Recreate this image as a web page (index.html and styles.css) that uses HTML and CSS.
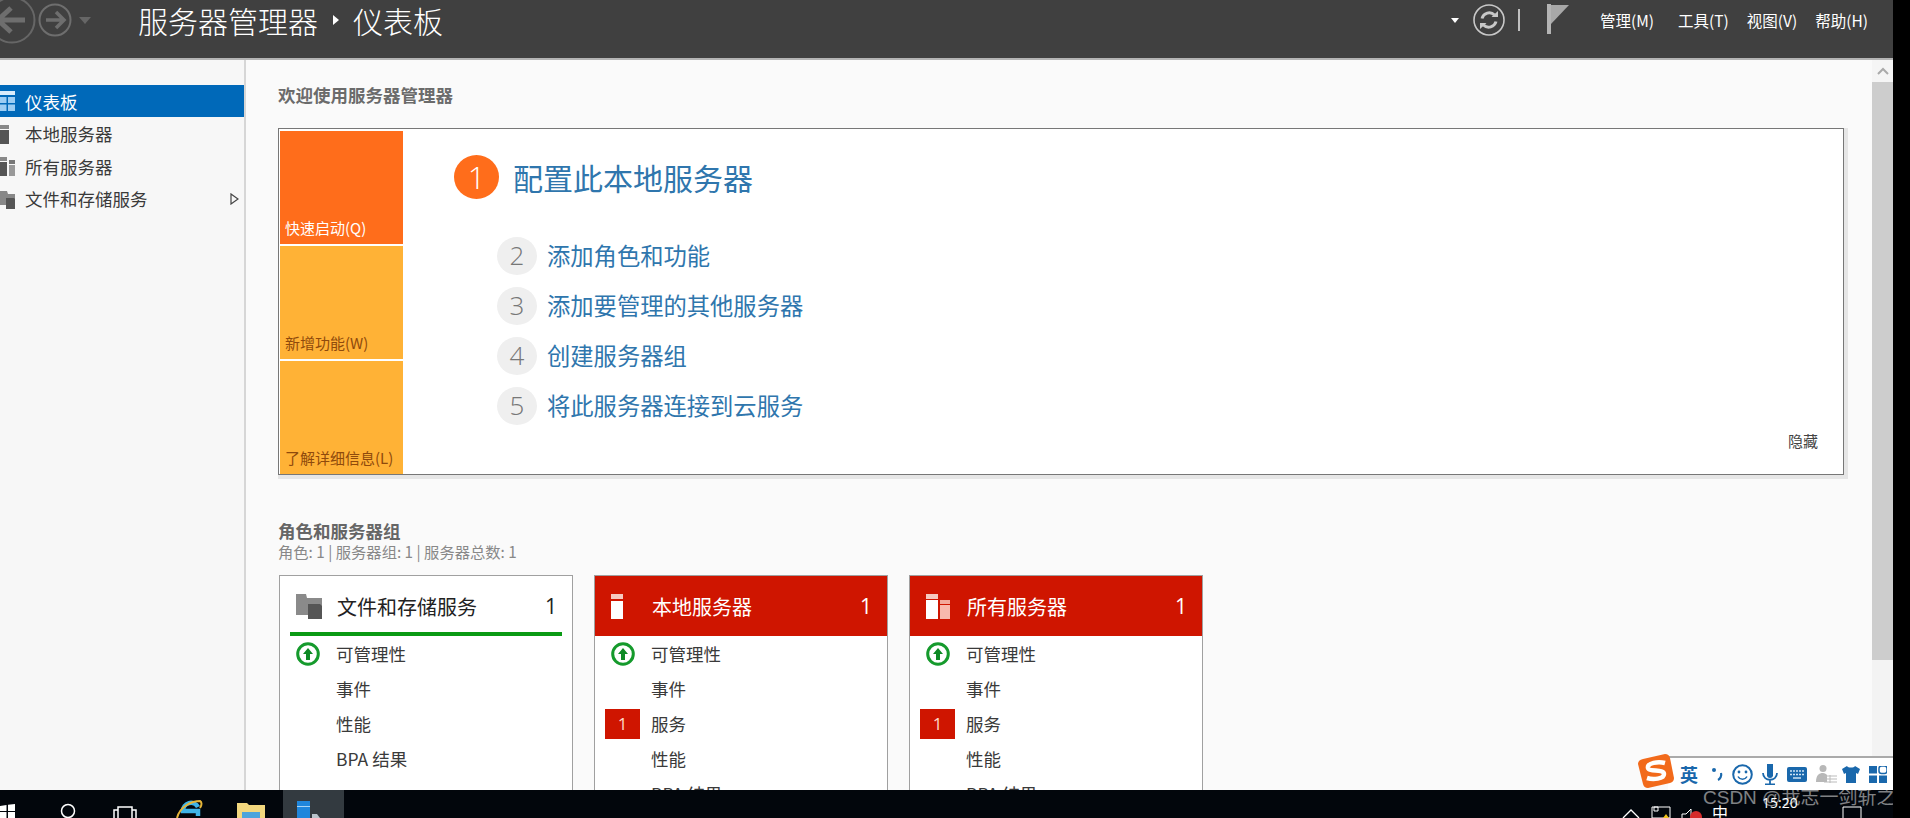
FILE: index.html
```html
<!DOCTYPE html>
<html lang="zh-CN">
<head>
  <meta charset="UTF-8">
  <title>服务器管理器</title>
  <link rel="stylesheet" href="styles.css">
</head>
<body>
  <div class="window">
    <header class="topbar">
      <svg class="nav" viewBox="0 0 100 44">
        <circle cx="12" cy="20" r="22.5" fill="none" stroke="#666" stroke-width="2"/>
        <path d="M-2 20H25M11 8L-2 20L11 32" fill="none" stroke="#6e6e6e" stroke-width="5"/>
        <circle cx="55" cy="20" r="15.5" fill="none" stroke="#6e6e6e" stroke-width="2"/>
        <path d="M46 20H63M56 12L64 20L56 28" fill="none" stroke="#6e6e6e" stroke-width="3.5"/>
        <path d="M79 17H91L85 24Z" fill="#666"/>
      </svg>
      <div class="crumbs">
        <span>服务器管理器</span>
        <i class="crumb-arrow"></i>
        <span>仪表板</span>
      </div>
      <div class="tools">
        <i class="drop-arrow"></i>
        <svg class="refresh" viewBox="0 0 32 32">
          <circle cx="16" cy="16" r="15" fill="none" stroke="#c8c8c8" stroke-width="1.6"/>
          <path d="M9 14.500A7.500 7.500 0 0 1 21.500 11M23 17.500A7.500 7.500 0 0 1 10.500 21" fill="none" stroke="#c8c8c8" stroke-width="3"/>
          <path d="M18.500 13H25V7ZM13.500 19H7V25Z" fill="#c8c8c8"/>
        </svg>
        <i class="tool-sep"></i>
        <svg class="flag" viewBox="0 0 22 30">
          <path d="M0 0H4V30H0Z" fill="#b4b4b4"/>
          <path d="M4 1H22L4 20Z" fill="#a8a8a8"/>
        </svg>
        <nav class="menu">
          <span class="menu-first">管理(M)</span>
          <span>工具(T)</span>
          <span>视图(V)</span>
          <span>帮助(H)</span>
        </nav>
      </div>
    </header>

    <div class="middle">
      <aside class="sidebar">
        <div class="side-item active">
          <svg class="side-icon" viewBox="0 0 15 20"><path d="M0 0H15V4H0Z" fill="#d8ecfb"/><path d="M0 6H6.500V12H0ZM8 6H15V12H8ZM0 13.500H6.500V20H0ZM8 13.500H15V20H8Z" fill="#9ccdf3"/></svg>
          <span>仪表板</span>
        </div>
        <div class="side-item">
          <svg class="side-icon" viewBox="0 0 15 20"><path d="M0 1H9V5H0Z" fill="#888"/><path d="M0 6H9V20H0Z" fill="#555"/></svg>
          <span>本地服务器</span>
        </div>
        <div class="side-item">
          <svg class="side-icon" viewBox="0 0 15 20"><path d="M0 1H7V5H0Z" fill="#888"/><path d="M0 6H7V20H0Z" fill="#555"/><path d="M9 4H15V8H9Z" fill="#777"/><path d="M9 9H15V20H9Z" fill="#999"/></svg>
          <span>所有服务器</span>
        </div>
        <div class="side-item">
          <svg class="side-icon" viewBox="0 0 15 20"><path d="M0 2H7L8 5H15V16H0Z" fill="#888"/><path d="M6 9H14L15 10V20H6Z" fill="#555"/></svg>
          <span>文件和存储服务</span>
          <svg class="side-arrow" viewBox="0 0 9 12"><path d="M1 1L8 6L1 11Z" fill="none" stroke="#444" stroke-width="1.200"/></svg>
        </div>
      </aside>

      <main class="content">
        <h2 class="welcome">欢迎使用服务器管理器</h2>

        <section class="panel">
          <div class="tiles">
            <div class="tile tile-now">快速启动(Q)</div>
            <div class="tile">新增功能(W)</div>
            <div class="tile">了解详细信息(L)</div>
          </div>
          <div class="steps">
            <div class="step-main">
              <span class="step-num-main">1</span>
              <a class="step-main-link">配置此本地服务器</a>
            </div>
            <div class="step"><span class="step-num">2</span><a class="step-link">添加角色和功能</a></div>
            <div class="step"><span class="step-num">3</span><a class="step-link">添加要管理的其他服务器</a></div>
            <div class="step"><span class="step-num">4</span><a class="step-link">创建服务器组</a></div>
            <div class="step"><span class="step-num">5</span><a class="step-link">将此服务器连接到云服务</a></div>
          </div>
          <span class="hide-link">隐藏</span>
        </section>

        <h3 class="roles-title">角色和服务器组</h3>
        <p class="roles-sub">角色: 1 | 服务器组: 1 | 服务器总数: 1</p>

        <div class="cards">
          <div class="card">
            <div class="card-head healthy">
              <svg class="card-icon" viewBox="0 0 26 25"><path d="M0 0H10L11 4H26V21H0Z" fill="#8a8a8a"/><path d="M12 10H24L26 12V25H12Z" fill="#555"/></svg>
              <span class="card-name">文件和存储服务</span>
              <span class="card-count">1</span>
            </div>
            <div class="row"><span class="row-mark"><svg class="ok-icon" viewBox="0 0 24 24"><circle cx="12" cy="12" r="10.300" fill="none" stroke="#159a2c" stroke-width="3"/><path d="M12 6L17 12H14V18H10V12H7Z" fill="#0e8a25"/></svg></span><span>可管理性</span></div>
            <div class="row"><span class="row-mark"></span><span>事件</span></div>
            <div class="row"><span class="row-mark"></span><span>性能</span></div>
            <div class="row"><span class="row-mark"></span><span>BPA 结果</span></div>
          </div>

          <div class="card">
            <div class="card-head alert">
              <svg class="card-icon" viewBox="0 0 26 25"><path d="M0 0H12V5H0Z" fill="#f6c9c0"/><path d="M0 7H12V25H0Z" fill="#fff"/></svg>
              <span class="card-name">本地服务器</span>
              <span class="card-count">1</span>
            </div>
            <div class="row"><span class="row-mark"><svg class="ok-icon" viewBox="0 0 24 24"><circle cx="12" cy="12" r="10.300" fill="none" stroke="#159a2c" stroke-width="3"/><path d="M12 6L17 12H14V18H10V12H7Z" fill="#0e8a25"/></svg></span><span>可管理性</span></div>
            <div class="row"><span class="row-mark"></span><span>事件</span></div>
            <div class="row"><span class="row-mark"><b class="badge">1</b></span><span>服务</span></div>
            <div class="row"><span class="row-mark"></span><span>性能</span></div>
            <div class="row"><span class="row-mark"></span><span>BPA 结果</span></div>
          </div>

          <div class="card">
            <div class="card-head alert">
              <svg class="card-icon" viewBox="0 0 26 25"><path d="M0 0H12V5H0Z" fill="#f6c9c0"/><path d="M0 6H12V25H0Z" fill="#fff"/><path d="M14 6H24V10H14Z" fill="#f3a99b"/><path d="M14 11H24V25H14Z" fill="#f8b9ad"/></svg>
              <span class="card-name">所有服务器</span>
              <span class="card-count">1</span>
            </div>
            <div class="row"><span class="row-mark"><svg class="ok-icon" viewBox="0 0 24 24"><circle cx="12" cy="12" r="10.300" fill="none" stroke="#159a2c" stroke-width="3"/><path d="M12 6L17 12H14V18H10V12H7Z" fill="#0e8a25"/></svg></span><span>可管理性</span></div>
            <div class="row"><span class="row-mark"></span><span>事件</span></div>
            <div class="row"><span class="row-mark"><b class="badge">1</b></span><span>服务</span></div>
            <div class="row"><span class="row-mark"></span><span>性能</span></div>
            <div class="row"><span class="row-mark"></span><span>BPA 结果</span></div>
          </div>
        </div>
      </main>

      <div class="scrollbar">
        <div class="scroll-btn"><svg viewBox="0 0 12 8" width="12" height="8"><path d="M1 7L6 2L11 7" fill="none" stroke="#aaa" stroke-width="2"/></svg></div>
        <div class="scroll-thumb"></div>
        <div class="scroll-track"></div>
      </div>
    </div>

    <footer class="taskbar">
      <svg class="task-start" viewBox="0 0 15 28"><path d="M0 16L6.500 15V21H0ZM8 14.800L15 14V21H8ZM0 22H6.500V28H0ZM8 22H15V28H8Z" fill="#fff"/></svg>
      <svg class="task-search" viewBox="0 0 16 28"><circle cx="8" cy="21" r="6.500" fill="none" stroke="#fff" stroke-width="1.500"/></svg>
      <svg class="task-view" viewBox="0 0 24 28"><path d="M5 28V17H19V28M5 20H1V28M19 20H23V28" fill="none" stroke="#fff" stroke-width="1.500"/></svg>
      <svg class="task-ie" viewBox="0 0 27 28"><path d="M22 26V21H7A8 8 0 0 1 22 17" fill="none" stroke="#3fb4e8" stroke-width="4.500"/><path d="M1 28C4 16 16 11 24 11C26 12 26 15 24 18" fill="none" stroke="#e5b53a" stroke-width="2"/></svg>
      <svg class="task-folder" viewBox="0 0 28 28"><path d="M0 13H10L12 15H28V28H0Z" fill="#f2d77e"/><path d="M5 22H23V28H5Z" fill="#4ca4dc"/></svg>
      <div class="task-active">
        <svg viewBox="0 0 23 28" width="23" height="28"><path d="M0 11H13V28H0Z" fill="#1f86dc"/><path d="M0 16H13V17H0Z" fill="#a8d4f5"/><path d="M15 24H20L23 28H15Z" fill="#b9c4cc"/></svg>
      </div>
      <div class="tray">
        <svg class="tray-caret" viewBox="0 0 18 28"><path d="M1 28L9 20L17 28" fill="none" stroke="#fff" stroke-width="1.300"/></svg>
        <svg class="tray-net" viewBox="0 0 20 28"><path d="M1 17H19V28H1Z" fill="none" stroke="#fff"/><path d="M3 17H7V21H3Z" fill="none" stroke="#fff"/><path d="M15 24L18 28H12Z" fill="#f1c21b"/></svg>
        <svg class="tray-sound" viewBox="0 0 24 28"><path d="M1 28V24H5L10 19V28" fill="none" stroke="#fff"/><circle cx="15" cy="27" r="6" fill="#d62b2b"/></svg>
        <span class="tray-ime">中</span>
        <span class="tray-time">15:20</span>
        <svg class="tray-note" viewBox="0 0 20 28"><path d="M1 28V17H19V28" fill="none" stroke="#fff"/></svg>
      </div>
    </footer>

    <div class="ime">
      <svg class="ime-logo" viewBox="0 0 36 34">
        <path d="M5 5L27 0Q31 0 32 4L36 24Q36 28 32 29L10 34Q6 34 5 30L0 10Q0 6 5 5Z" fill="#f26a1b"/>
        <path d="M27 9C20 7 9 9 10 14C11 18 26 15 26 20C26 25 15 26 9 24" fill="none" stroke="#fff" stroke-width="4.500"/>
      </svg>
      <div class="ime-bar">
        <span class="ime-lang">英</span>
        <svg class="ime-punct" viewBox="0 0 11 14"><circle cx="2" cy="3" r="2" fill="#1a68ac"/><path d="M9 6C10 9 8 12 6 13" fill="none" stroke="#1a68ac" stroke-width="2.200"/></svg>
        <svg class="ime-smile" viewBox="0 0 21 21"><circle cx="10.500" cy="10.500" r="9.300" fill="none" stroke="#1a68ac" stroke-width="2"/><circle cx="7" cy="8" r="1.400" fill="#1a68ac"/><circle cx="14" cy="8" r="1.400" fill="#1a68ac"/><path d="M6 12.500C8 16 13 16 15 12.500" fill="none" stroke="#1a68ac" stroke-width="1.500"/></svg>
        <svg class="ime-mic" viewBox="0 0 16 21"><path d="M5 0H11V12H5Z" fill="#1a68ac"/><circle cx="8" cy="2.500" r="3" fill="#1a68ac"/><circle cx="8" cy="11" r="3" fill="#1a68ac"/><path d="M1 9C1 18 15 18 15 9M8 16V20M3 20.500H13" fill="none" stroke="#1a68ac" stroke-width="1.800"/></svg>
        <svg class="ime-keys" viewBox="0 0 20 15"><rect width="20" height="15" rx="2" fill="#1a68ac"/><path d="M3 4H17M3 7.500H17" stroke="#cfe3f3" stroke-width="1.500" stroke-dasharray="2 1"/><path d="M6 11H14" stroke="#cfe3f3" stroke-width="1.500"/></svg>
        <svg class="ime-person" viewBox="0 0 21 18"><circle cx="7" cy="3.500" r="3.500" fill="#b8b8b8"/><path d="M0 17C0 10 3 8 7 8C9 8 10 9 11 10V17Z" fill="#b8b8b8"/><path d="M8 11H21M8 14H21M8 17H21M14 10V18" stroke="#bbb"/></svg>
        <svg class="ime-shirt" viewBox="0 0 18 17"><path d="M5 0L0 3L2 8L4 7V17H14V7L16 8L18 3L13 0C12 2 6 2 5 0Z" fill="#1a68ac"/></svg>
        <svg class="ime-grid" viewBox="0 0 18 17"><rect width="8" height="7.500" fill="#1a68ac"/><rect x="10" width="8" height="7.500" rx="2.500" fill="none" stroke="#1a68ac" stroke-width="1.500"/><rect y="9.500" width="8" height="7.500" fill="#1a68ac"/><rect x="10" y="9.500" width="8" height="7.500" fill="#1a68ac"/></svg>
      </div>
    </div>
    <div class="watermark">CSDN @我志一剑斩之</div>
  </div>
</body>
</html>
```

FILE: styles.css
```css
* {
  box-sizing: border-box;
}
html, body {
  margin: 0;
  height: 818px;
  overflow: hidden;
  background: #000;
}
body {
  font-family: "Noto Sans CJK SC", "Open Sans", sans-serif;
  color: #333;
}
h2, h3, p {
  margin: 0;
}

.window {
  position: relative;
  width: 1893px;
  height: 818px;
  display: flex;
  flex-direction: column;
  overflow: hidden;
}

/* top bar */
.topbar {
  flex: none;
  height: 60px;
  background: #404040;
  border-bottom: 2px solid #b4b4b4;
  display: flex;
  align-items: flex-start;
  padding-right: 25px;
  color: #fff;
}
.nav {
  width: 100px;
  height: 44px;
  margin-right: 38px;
  overflow: hidden;
}
.crumbs {
  display: flex;
  align-items: center;
  font-size: 30px;
  line-height: 40px;
  font-weight: 300;
}
.crumb-arrow {
  width: 0;
  height: 0;
  margin: 0 14px 0 15px;
  border-left: 6px solid #fff;
  border-top: 5px solid transparent;
  border-bottom: 5px solid transparent;
}
.tools {
  margin-left: auto;
  display: flex;
  align-items: center;
  height: 40px;
}
.drop-arrow {
  width: 0;
  height: 0;
  margin-right: 14px;
  border-top: 5px solid #fff;
  border-left: 4.500px solid transparent;
  border-right: 4.500px solid transparent;
}
.refresh {
  width: 32px;
  height: 32px;
  margin-right: 13px;
}
.tool-sep {
  width: 2px;
  height: 22px;
  margin-right: 27px;
  background: #c0c0c0;
}
.flag {
  width: 22px;
  height: 30px;
  margin-right: 31px;
  margin-top: -3px;
}
.menu {
  display: flex;
  gap: 18px;
  font-size: 15.500px;
  line-height: 20px;
}
.menu-first {
  margin-right: 6px;
}

/* middle part */
.middle {
  flex: none;
  height: 730px;
  display: flex;
}
.sidebar {
  flex: none;
  width: 246px;
  padding-top: 25px;
  background: #f7f7f7;
  border-right: 2px solid #d6d6d6;
}
.side-item {
  height: 32.500px;
  display: flex;
  align-items: center;
  font-size: 17.500px;
  color: #3a3a3a;
}
.side-item.active {
  height: 32px;
  margin-bottom: 0.500px;
  background: #0069b9;
  color: #fff;
}
.side-icon {
  flex: none;
  width: 15px;
  height: 20px;
  margin-right: 10px;
}
.side-arrow {
  width: 9px;
  height: 12px;
  margin-left: auto;
  margin-right: 5px;
}

.content {
  flex: 1;
  min-width: 0;
  overflow: hidden;
  padding: 23px 0 0 32px;
  background: #fafafa;
}
.welcome {
  font-size: 17.500px;
  line-height: 24px;
  font-weight: 700;
  color: #6b6b6b;
  margin-bottom: 21px;
}

/* quick start panel */
.panel {
  width: 1566px;
  height: 347px;
  display: flex;
  padding: 2px 0 0 1px;
  background: #fff;
  border: 1px solid #777;
  box-shadow: 2px 2px 0 2px #e6e6e6;
}
.tiles {
  flex: none;
  width: 123px;
  display: flex;
  flex-direction: column;
  gap: 2px;
}
.tile {
  flex: 1;
  display: flex;
  align-items: flex-end;
  padding: 0 0 6px 5px;
  font-size: 15px;
  line-height: 20px;
  background: #ffb236;
  color: #8f4a0c;
}
.tile-now {
  background: #ff6d1b;
  color: #fff;
}
.steps {
  flex: 1;
  padding: 24px 0 0 51px;
}
.step-main {
  display: flex;
  align-items: center;
  gap: 14px;
  height: 44px;
  margin-bottom: 38px;
}
.step-num-main {
  width: 45px;
  height: 44px;
  border-radius: 50%;
  background: #ff6d1b;
  color: #fff;
  text-align: center;
  font: 300 31px/44px "Open Sans", sans-serif;
}
.step-main-link {
  font-size: 30px;
  line-height: 44px;
  color: #2f76ad;
}
.step {
  display: flex;
  align-items: center;
  gap: 10px;
  height: 38px;
  margin: 0 0 12px 43px;
}
.step-num {
  width: 40px;
  height: 38px;
  border-radius: 50%;
  background: #efefef;
  color: #777;
  text-align: center;
  font: 300 26px/36px "Open Sans", sans-serif;
}
.step-link {
  font-size: 23.300px;
  line-height: 36px;
  margin-bottom: 2px;
  color: #2f76ad;
}
.hide-link {
  align-self: flex-end;
  margin: 0 25px 23px 0;
  font-size: 15px;
  line-height: 20px;
  color: #444;
}

/* roles and groups */
.roles-title {
  margin-top: 45px;
  font-size: 17.500px;
  line-height: 22px;
  font-weight: 700;
  color: #666;
}
.roles-sub {
  font-size: 15.300px;
  line-height: 18px;
  color: #888;
}
.cards {
  display: flex;
  gap: 21px;
  margin: 15px 0 0 1px;
}
.card {
  flex: none;
  width: 294px;
  height: 300px;
  background: #fff;
  border: 1px solid #a0a0a0;
}
.card-head {
  height: 60px;
  display: flex;
  align-items: center;
  padding: 0 15px 0 16px;
  font-size: 20px;
  color: #222;
}
.card-head.healthy {
  background: linear-gradient(#0a9a14, #0a9a14) no-repeat 10px 56px / 272px 4px;
}
.card-head.alert {
  background: #cf1500;
  color: #fff;
}
.card-icon {
  flex: none;
  width: 26px;
  height: 25px;
  margin-right: 15px;
}
.card-count {
  margin-left: auto;
  font: 500 21px/26px "Open Sans", sans-serif;
}
.row {
  height: 35px;
  display: grid;
  grid-template-columns: 55px 1fr;
  column-gap: 1px;
  align-items: center;
  font-size: 17.500px;
  color: #3a3a3a;
}
.row-mark {
  display: flex;
  justify-content: center;
  align-items: center;
}
.ok-icon {
  width: 24px;
  height: 24px;
}
.badge {
  width: 35px;
  height: 30px;
  background: #cf1500;
  color: #ffd9c8;
  text-align: center;
  font: 400 17px/30px "Open Sans", sans-serif;
}

.scrollbar {
  flex: none;
  width: 21px;
  display: flex;
  flex-direction: column;
}
.scroll-btn {
  height: 22px;
  background: #f5f5f5;
  display: flex;
  justify-content: center;
  align-items: center;
}
.scroll-thumb {
  height: 578px;
  background: #cdcdcd;
}
.scroll-track {
  flex: 1;
  background: #f3f3f3;
}

/* taskbar */
.taskbar {
  flex: none;
  height: 28px;
  display: flex;
  background: #02060c;
  overflow: hidden;
}
.taskbar svg {
  flex: none;
  height: 28px;
}
.task-start { width: 15px; }
.task-search { width: 16px; margin-left: 45px; }
.task-view { width: 24px; margin-left: 37px; }
.task-ie { width: 27px; margin-left: 39px; }
.task-folder { width: 28px; margin-left: 34px; }
.task-active {
  width: 61px;
  height: 28px;
  margin-left: 18px;
  padding-left: 14px;
  background: #333a40;
}
.tray {
  margin-left: auto;
  display: flex;
  color: #fff;
}
.tray-caret { width: 18px; margin-right: 11px; }
.tray-net { width: 20px; margin-right: 10px; }
.tray-sound { width: 24px; margin-right: 7px; }
.tray-ime {
  width: 16px;
  margin-right: 34px;
  font-size: 16px;
  line-height: 20px;
  padding-top: 12px;
}
.tray-time {
  width: 40px;
  margin-right: 40px;
  font: 14px/26px "Open Sans", sans-serif;
}
.tray-note { width: 20px; margin-right: 31px; }

/* input method bar and watermark, over the window */
.ime {
  position: absolute;
  left: 1638px;
  top: 754px;
  display: flex;
  align-items: flex-start;
}
.ime-logo {
  position: relative;
  z-index: 1;
  flex: none;
  width: 36px;
  height: 34px;
  margin-right: -6px;
}
.ime-bar {
  width: 225px;
  height: 34px;
  margin-top: 2px;
  display: flex;
  align-items: center;
  gap: 9px;
  padding-left: 12px;
  background: #fff;
  border-top: 2px solid #aaa;
}
.ime-lang {
  width: 19px;
  margin-right: 4px;
  font-size: 18px;
  font-weight: 700;
  line-height: 24px;
  color: #1a68ac;
}
.ime-punct { width: 11px; height: 14px; }
.ime-smile { width: 21px; height: 21px; }
.ime-mic { width: 16px; height: 21px; }
.ime-keys { width: 20px; height: 15px; }
.ime-person { width: 21px; height: 18px; margin-right: -4px; }
.ime-shirt { width: 18px; height: 17px; }
.ime-grid { width: 18px; height: 17px; }
.watermark {
  position: absolute;
  left: 1703px;
  top: 787px;
  width: 190px;
  overflow: hidden;
  white-space: nowrap;
  font: 19px/22px "Liberation Sans", "Noto Sans CJK SC", sans-serif;
  color: rgba(255, 255, 255, 0.5);
}
```
